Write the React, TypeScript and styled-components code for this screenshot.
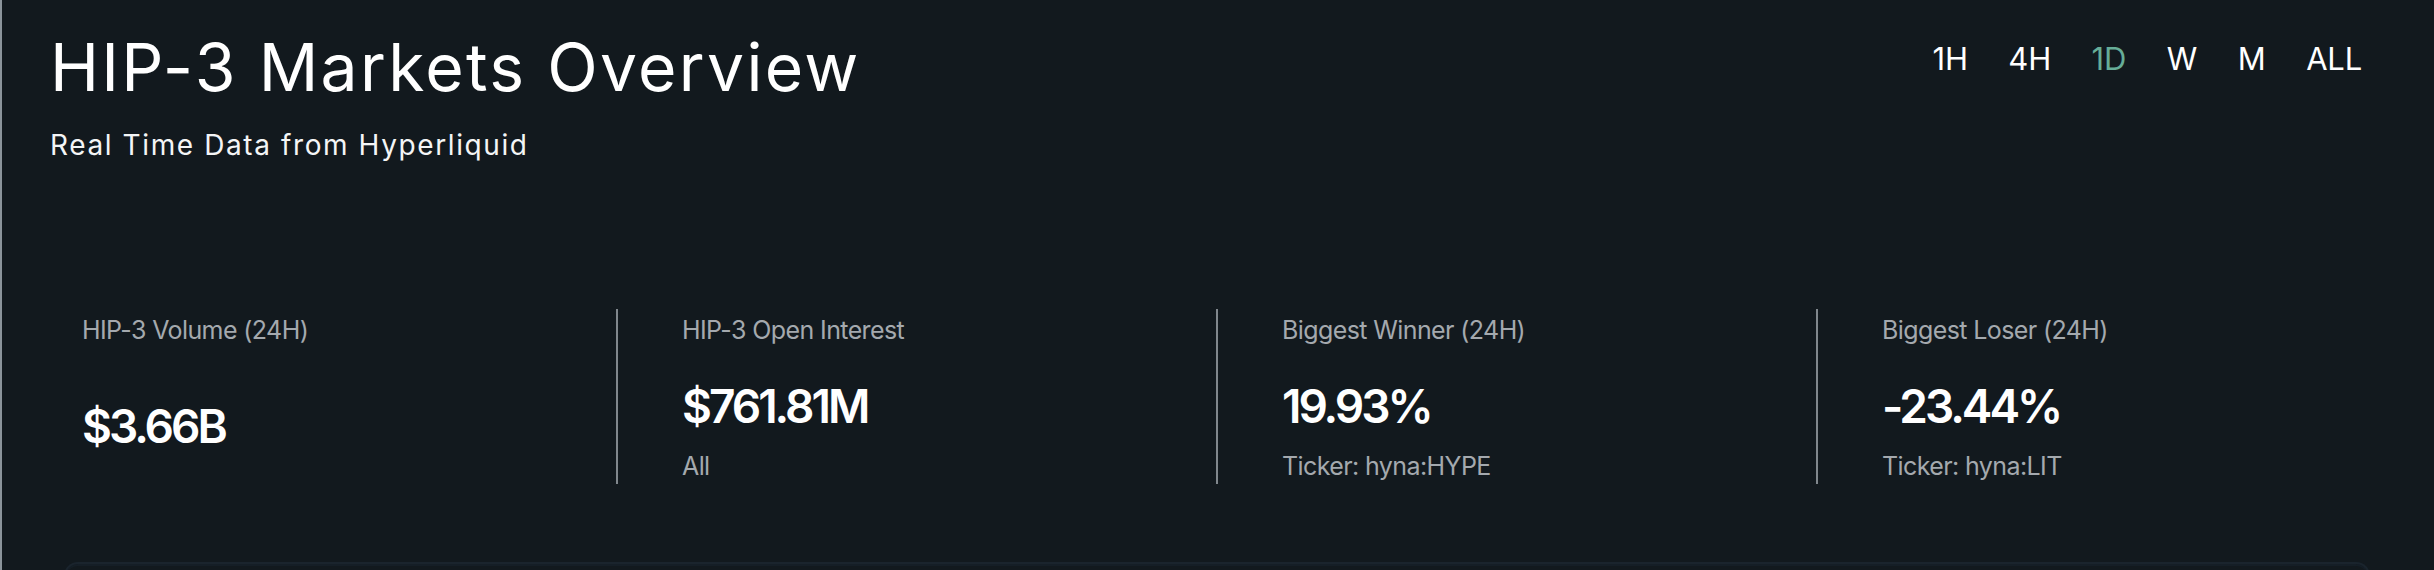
import React, { useState } from "react";
import styled, { createGlobalStyle } from "styled-components";

const GlobalStyle = createGlobalStyle`
  html, body {
    margin: 0;
    padding: 0;
    background: #12191e;
  }
  body {
    font-family: Inter, "Liberation Sans", sans-serif;
    -webkit-font-smoothing: antialiased;
  }
`;

type Stat = {
  label: string;
  value: string;
  sub?: string;
};

const stats: Stat[] = [
  { label: "HIP-3 Volume (24H)", value: "$3.66B" },
  { label: "HIP-3 Open Interest", value: "$761.81M", sub: "All" },
  { label: "Biggest Winner (24H)", value: "19.93%", sub: "Ticker: hyna:HYPE" },
  { label: "Biggest Loser (24H)", value: "-23.44%", sub: "Ticker: hyna:LIT" },
];

const ranges = ["1H", "4H", "1D", "W", "M", "ALL"];

const App: React.FC = () => {
  const [range, setRange] = useState<string>("1D");
  return (
    <>
      <GlobalStyle />
      <StylePage>
        <StyleHeader>
          <div>
            <StyleTitle>HIP-3 Markets Overview</StyleTitle>
            <StyleSubtitle>Real Time Data from Hyperliquid</StyleSubtitle>
          </div>
          <StyleRanges>
            {ranges.map((r) => (
              <StyleRange key={r} active={r === range} onClick={() => setRange(r)}>
                {r}
              </StyleRange>
            ))}
          </StyleRanges>
        </StyleHeader>

        <StyleStats>
          {stats.map((item, index) => (
            <StyleStat key={item.label} divided={index > 0}>
              <StyleStatLabel>{item.label}</StyleStatLabel>
              <StyleStatBody single={!item.sub}>
                <StyleStatValue>{item.value}</StyleStatValue>
                {item.sub && <StyleStatSub>{item.sub}</StyleStatSub>}
              </StyleStatBody>
            </StyleStat>
          ))}
        </StyleStats>

        <StyleNextCard />
      </StylePage>
    </>
  );
};

const StylePage = styled.div`
  height: 570px;
  box-sizing: border-box;
  border-left: 2px solid #8b949b;
  overflow: hidden;
  color: #ffffff;
`;

const StyleHeader = styled.div`
  display: flex;
  justify-content: space-between;
  align-items: flex-start;
  padding: 34px 72px 0 48px;
`;

const StyleTitle = styled.h1`
  margin: 0;
  font-size: 66px;
  line-height: 66px;
  font-weight: 400;
  letter-spacing: 2.3px;
  color: #ffffff;
`;

const StyleSubtitle = styled.div`
  margin-top: 29px;
  font-size: 28px;
  line-height: 32px;
  font-weight: 400;
  letter-spacing: 1.6px;
  color: #f4f5f6;
`;

const StyleRanges = styled.div`
  display: flex;
  gap: 40.6px;
  padding-top: 7px;
`;

const StyleRange = styled.span<{ active: boolean }>`
  font-size: 31px;
  line-height: 36px;
  letter-spacing: -0.2px;
  color: ${(p) => (p.active ? "#66ad98" : "#ffffff")};
  cursor: pointer;
`;

const StyleStats = styled.div`
  display: grid;
  grid-template-columns: repeat(4, 600px);
  margin: 148px 0 0 14px;
`;

const StyleStat = styled.div<{ divided: boolean }>`
  display: flex;
  flex-direction: column;
  height: 175px;
  box-sizing: border-box;
  padding: 6px 0 0 64px;
  border-left: 2px solid ${(p) => (p.divided ? "#80878d" : "transparent")};
`;

const StyleStatLabel = styled.div`
  font-size: 25px;
  line-height: 30px;
  letter-spacing: -0.6px;
  color: #a4a9ae;
`;

const StyleStatBody = styled.div<{ single: boolean }>`
  flex: 1;
  display: flex;
  flex-direction: column;
  justify-content: center;
  gap: 20px;
  padding: ${(p) => (p.single ? "25px" : "35px")} 0 3px;
`;

const StyleStatValue = styled.div`
  font-size: 46px;
  line-height: 50px;
  font-weight: 600;
  letter-spacing: -3px;
  color: #ffffff;
`;

const StyleStatSub = styled.div`
  font-size: 25px;
  line-height: 30px;
  letter-spacing: -0.6px;
  color: #a4a9ae;
`;

const StyleNextCard = styled.div`
  margin: 78px 64px 0 62px;
  height: 40px;
  border: 2px solid #1a242d;
  border-bottom: none;
  border-radius: 14px 14px 0 0;
  box-shadow: inset 0 2px 0 #151e26;
`;

export default App;
